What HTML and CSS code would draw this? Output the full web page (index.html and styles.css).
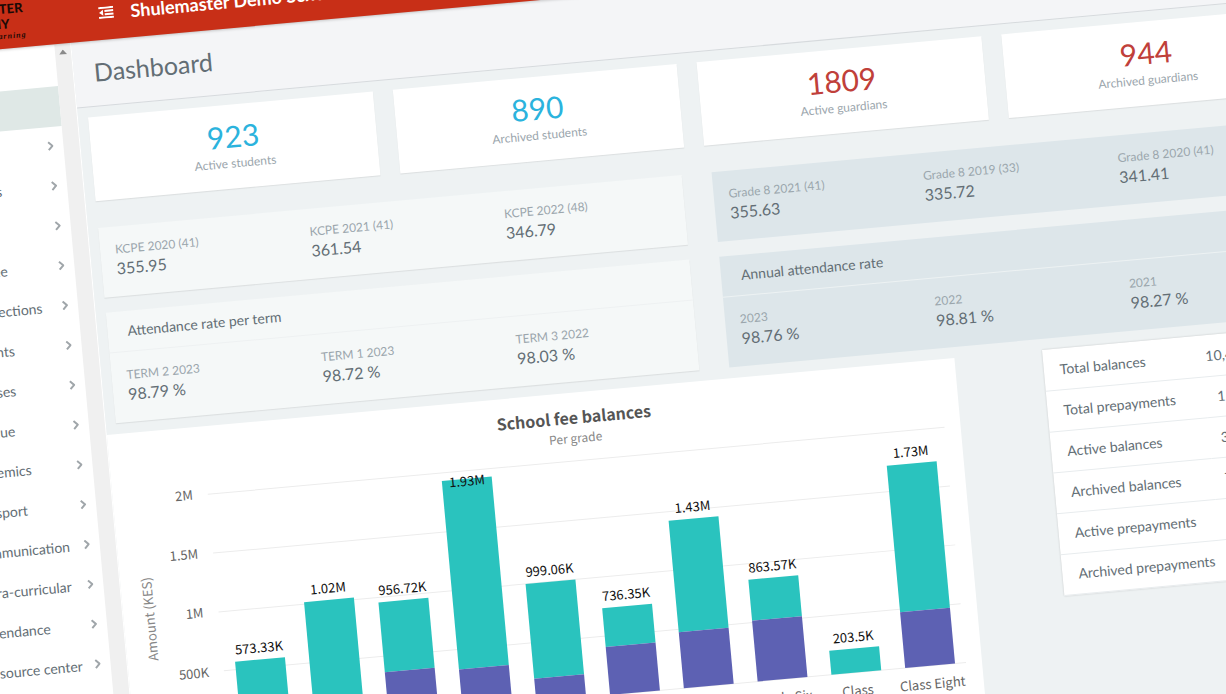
FILE: index.html
```html
<!DOCTYPE html>
<html lang="en">
<head>
<meta charset="utf-8">
<title>Dashboard</title>
<link rel="stylesheet" href="styles.css">
</head>
<body>
<div class="stage">
  <header class="topbar">
    <div class="logo">
      <span class="logo-name">SHULEMASTER</span>
      <span class="logo-name">ACADEMY</span>
      <span class="logo-tag">Excellence in learning</span>
    </div>
    <button class="menu-toggle" aria-label="Toggle menu">
      <svg width="15" height="12" viewBox="0 0 15 12" fill="none" stroke="#fff" stroke-width="2">
        <path d="M0 1h15M6 4.3h9M6 7.7h9M0 11h15"/>
        <path d="M4.5 3v6L0.5 6z" fill="#fff" stroke="none"/>
      </svg>
    </button>
    <span class="school">Shulemaster Demo School</span>
  </header>

  <div class="body">
    <aside class="sidebar">
      <nav class="nav">
        <a class="nav-item active" href="#">Dashboard</a>
        <a class="nav-item" href="#">Students<svg class="chev" viewBox="0 0 6 10"><path d="M1 1l4 4-4 4"/></svg></a>
        <a class="nav-item" href="#">Guardians<svg class="chev" viewBox="0 0 6 10"><path d="M1 1l4 4-4 4"/></svg></a>
        <a class="nav-item" href="#">Staff<svg class="chev" viewBox="0 0 6 10"><path d="M1 1l4 4-4 4"/></svg></a>
        <a class="nav-item" href="#">Employee<svg class="chev" viewBox="0 0 6 10"><path d="M1 1l4 4-4 4"/></svg></a>
        <a class="nav-item" href="#">Fee collections<svg class="chev" viewBox="0 0 6 10"><path d="M1 1l4 4-4 4"/></svg></a>
        <a class="nav-item" href="#">Payments<svg class="chev" viewBox="0 0 6 10"><path d="M1 1l4 4-4 4"/></svg></a>
        <a class="nav-item" href="#">Expenses<svg class="chev" viewBox="0 0 6 10"><path d="M1 1l4 4-4 4"/></svg></a>
        <a class="nav-item" href="#">Revenue<svg class="chev" viewBox="0 0 6 10"><path d="M1 1l4 4-4 4"/></svg></a>
        <a class="nav-item" href="#">Academics<svg class="chev" viewBox="0 0 6 10"><path d="M1 1l4 4-4 4"/></svg></a>
        <a class="nav-item" href="#">Transport<svg class="chev" viewBox="0 0 6 10"><path d="M1 1l4 4-4 4"/></svg></a>
        <a class="nav-item" href="#">Communication<svg class="chev" viewBox="0 0 6 10"><path d="M1 1l4 4-4 4"/></svg></a>
        <a class="nav-item" href="#">Extra-curricular<svg class="chev" viewBox="0 0 6 10"><path d="M1 1l4 4-4 4"/></svg></a>
        <a class="nav-item" href="#">Attendance<svg class="chev" viewBox="0 0 6 10"><path d="M1 1l4 4-4 4"/></svg></a>
        <a class="nav-item" href="#">Resource center<svg class="chev" viewBox="0 0 6 10"><path d="M1 1l4 4-4 4"/></svg></a>
      </nav>
      <div class="scroll-track">
        <svg width="8" height="5" viewBox="0 0 8 5"><path d="M0 5l4-5 4 5z" fill="#8a8a8a"/></svg>
      </div>
    </aside>

    <main class="content">
      <div class="title-bar"><h1>Dashboard</h1></div>

      <section class="cards">
        <div class="card"><span class="num blue">923</span><span class="label">Active students</span></div>
        <div class="card"><span class="num blue">890</span><span class="label">Archived students</span></div>
        <div class="card"><span class="num red">1809</span><span class="label">Active guardians</span></div>
        <div class="card"><span class="num red">944</span><span class="label">Archived guardians</span></div>
      </section>

      <section class="panels">
        <div class="panel stats">
          <div class="stat"><span class="label">KCPE 2020 (41)</span><span class="value">355.95</span></div>
          <div class="stat"><span class="label">KCPE 2021 (41)</span><span class="value">361.54</span></div>
          <div class="stat"><span class="label">KCPE 2022 (48)</span><span class="value">346.79</span></div>
        </div>
        <div class="panel dark stats">
          <div class="stat"><span class="label">Grade 8 2021 (41)</span><span class="value">355.63</span></div>
          <div class="stat"><span class="label">Grade 8 2019 (33)</span><span class="value">335.72</span></div>
          <div class="stat"><span class="label">Grade 8 2020 (41)</span><span class="value">341.41</span></div>
        </div>
        <div class="panel">
          <h2>Attendance rate per term</h2>
          <div class="stats">
            <div class="stat"><span class="label">TERM 2 2023</span><span class="value">98.79 %</span></div>
            <div class="stat"><span class="label">TERM 1 2023</span><span class="value">98.72 %</span></div>
            <div class="stat"><span class="label">TERM 3 2022</span><span class="value">98.03 %</span></div>
          </div>
        </div>
        <div class="panel dark">
          <h2>Annual attendance rate</h2>
          <div class="stats">
            <div class="stat"><span class="label">2023</span><span class="value">98.76 %</span></div>
            <div class="stat"><span class="label">2022</span><span class="value">98.81 %</span></div>
            <div class="stat"><span class="label">2021</span><span class="value">98.27 %</span></div>
          </div>
        </div>
      </section>

      <section class="lower">
        <div class="chart">
          <svg viewBox="-1 0 850 370" role="img" aria-label="School fee balances per grade">
            <text class="c-title" x="465" y="31">School fee balances</text>
            <text class="c-sub" x="465" y="50">Per grade</text>
            <path class="grid" d="M94 68H833M94 127H833M94 186H833M94 245H833M94 304H833"/>
            <g class="y-lab">
              <text x="79" y="72">2M</text>
              <text x="79" y="131">1.5M</text>
              <text x="79" y="190">1M</text>
              <text x="79" y="250">500K</text>
            </g>
            <text class="y-title" transform="translate(30 187) rotate(-90)">Amount (KES)</text>
            <g class="teal">
              <rect x="106" y="237" width="50" height="67"/>
              <rect x="180" y="184" width="50" height="120"/>
              <rect x="254" y="191" width="50" height="70"/>
              <rect x="328" y="76" width="50" height="189"/>
              <rect x="402" y="186" width="50" height="95"/>
              <rect x="476" y="217" width="50" height="39"/>
              <rect x="550" y="136" width="50" height="112"/>
              <rect x="624" y="202" width="50" height="41"/>
              <rect x="698" y="280" width="50" height="24"/>
              <rect x="772" y="101" width="50" height="147"/>
            </g>
            <g class="purple">
              <rect x="254" y="261" width="50" height="43"/>
              <rect x="328" y="265" width="50" height="39"/>
              <rect x="402" y="281" width="50" height="23"/>
              <rect x="476" y="256" width="50" height="48"/>
              <rect x="550" y="248" width="50" height="56"/>
              <rect x="624" y="243" width="50" height="61"/>
              <rect x="772" y="248" width="50" height="56"/>
            </g>
            <g class="d-lab">
              <text x="131" y="230">573.33K</text>
              <text x="205" y="177">1.02M</text>
              <text x="279" y="184">956.72K</text>
              <text x="353" y="83">1.93M</text>
              <text x="427" y="179">999.06K</text>
              <text x="501" y="210">736.35K</text>
              <text x="575" y="129">1.43M</text>
              <text x="649" y="195">863.57K</text>
              <text x="723" y="273">203.5K</text>
              <text x="797" y="94">1.73M</text>
            </g>
            <g class="x-lab">
              <text x="649" y="327">Grade Six</text>
              <text x="723" y="327">Class</text>
              <text x="798" y="327">Class Eight</text>
            </g>
          </svg>
        </div>
        <table class="totals">
          <tr><th scope="row">Total balances</th><td>10,482,310.00</td></tr>
          <tr><th scope="row">Total prepayments</th><td>1,264,905.00</td></tr>
          <tr><th scope="row">Active balances</th><td>3,917,640.00</td></tr>
          <tr><th scope="row">Archived balances</th><td>7,564,670.00</td></tr>
          <tr><th scope="row">Active prepayments</th><td>742,155.00</td></tr>
          <tr><th scope="row">Archived prepayments</th><td>522,750.00</td></tr>
        </table>
      </section>
    </main>
  </div>
</div>
</body>
</html>
```
FILE: styles.css
```css
* { box-sizing: border-box; }

html, body { height: 100%; }

body {
  margin: 0;
  overflow: hidden;
  background: #eef2f3;
  font-family: Lato, "Open Sans", sans-serif;
  font-size: 14px;
  color: #636e75;
}

/* The whole application is shown tilted */
.stage {
  display: flex;
  flex-direction: column;
  width: calc(100% + 230px);
  min-height: calc(100% + 120px);
  margin-left: -167px;
  transform: rotate(-5.2deg);
  transform-origin: 167px 0;
}

.topbar {
  display: flex;
  align-items: center;
  height: 49px;
  background: #c82f17;
  box-shadow: 0 1px 3px rgba(0, 0, 0, 0.2);
  z-index: 1;
}

.logo {
  display: flex;
  flex-direction: column;
  align-items: center;
  width: 264px;
  padding: 0 0 5px 20px;
  color: #1c0a06;
}

.logo-name {
  font-size: 13px;
  line-height: 15px;
  font-weight: 900;
}

.logo-tag {
  font-family: "Liberation Serif", serif;
  font-size: 8px;
  line-height: 10px;
  font-style: italic;
  font-weight: 700;
  letter-spacing: 1px;
}

.menu-toggle {
  display: flex;
  padding: 0;
  border: 0;
  margin: 0 17px 5px 0;
  background: none;
}

.school {
  padding-bottom: 5px;
  font-size: 18px;
  font-weight: 700;
  color: #fff;
}

.body { display: flex; flex: 1; }

.sidebar {
  display: flex;
  flex: 0 0 234px;
  background: #fff;
}

.nav { flex: 1; padding-top: 42px; }

.nav-item {
  display: flex;
  align-items: center;
  justify-content: space-between;
  height: 40px;
  padding: 0 10px 2px 90px;
  color: #636e75;
  text-decoration: none;
}

.nav-item.active { background: #dfe8e6; }

.chev {
  width: 6px;
  height: 10px;
  fill: none;
  stroke: #a0a6aa;
  stroke-width: 2;
}

.scroll-track {
  display: flex;
  justify-content: center;
  width: 17px;
  padding-top: 6px;
  border-right: 1px solid #fff;
  background: #f0f0f0;
}

.content { flex: 1; min-width: 0; background: #eef2f3; }

.title-bar {
  display: flex;
  align-items: center;
  height: 66px;
  padding: 0 20px 4px;
  border-bottom: 1px solid #d6dadd;
  background: #f4f5f7;
}

h1 { margin: 0; font-size: 25px; line-height: 28px; font-weight: 400; }

.cards {
  display: grid;
  grid-template-columns: repeat(4, 1fr);
  gap: 20px;
  padding: 10px 10px 0;
}

.card {
  display: flex;
  flex-direction: column;
  align-items: center;
  padding: 14px 16px;
  background: #fff;
  box-shadow: 0 1px 1px rgba(0, 0, 0, 0.08);
}

.num { font-size: 30px; line-height: 34px; }
.blue { color: #2bb3dd; }
.red { color: #c0403a; }
.label { font-size: 12px; line-height: 18px; color: #9ba6ad; }
.card .label { line-height: 22px; }

.panels {
  display: grid;
  grid-template-columns: 1fr 1fr;
  gap: 15px 30px;
  padding: 27px 10px 11px;
}

.panel { background: #f5f8f8; box-shadow: 0 1px 1px rgba(0, 0, 0, 0.08); }
.panel.dark { background: #dde6ea; box-shadow: none; }

h2 {
  margin: 0;
  padding: 0 20px;
  border-bottom: 1px solid #eef1f2;
  font-size: 14px;
  line-height: 40px;
  font-weight: 400;
}

.dark h2 { border-color: #edf2f3; }

.stats { display: grid; grid-template-columns: repeat(3, 1fr); }

.stat {
  display: flex;
  flex-direction: column;
  padding: 14px 15px 18px;
}

.value { font-size: 16px; line-height: 20px; }

.lower {
  display: grid;
  grid-template-columns: 851fr 273fr;
  align-items: start;
  gap: 88px;
  padding-right: 10px;
}

.chart { background: #fff; }

.chart svg {
  display: block;
  width: 100%;
  font-family: "Noto Sans CJK SC", "Open Sans", sans-serif;
  font-size: 13px;
}

.c-title { font-size: 16px; font-weight: 700; fill: #555; text-anchor: middle; }
.c-sub { font-size: 12px; fill: #888; text-anchor: middle; }
.grid { stroke: #ececec; stroke-width: 1; fill: none; }
.y-lab { fill: #666; text-anchor: end; }
.y-title { font-size: 13px; fill: #888; text-anchor: middle; }
.teal { fill: #2ac3be; }
.purple { fill: #5d61b3; }
.d-lab { fill: #111; text-anchor: middle; }
.x-lab { fill: #666; text-anchor: middle; }

.totals {
  width: 100%;
  border-collapse: collapse;
  background: #fff;
  box-shadow: 0 0 2px rgba(0, 0, 0, 0.2);
}

.totals th, .totals td {
  height: 41px;
  padding: 0 0 0 16px;
  border-bottom: 1px solid #e8ecee;
  font-weight: 400;
  text-align: left;
  white-space: nowrap;
}

.totals td { padding: 0 20px 0 0; text-align: right; }
```
